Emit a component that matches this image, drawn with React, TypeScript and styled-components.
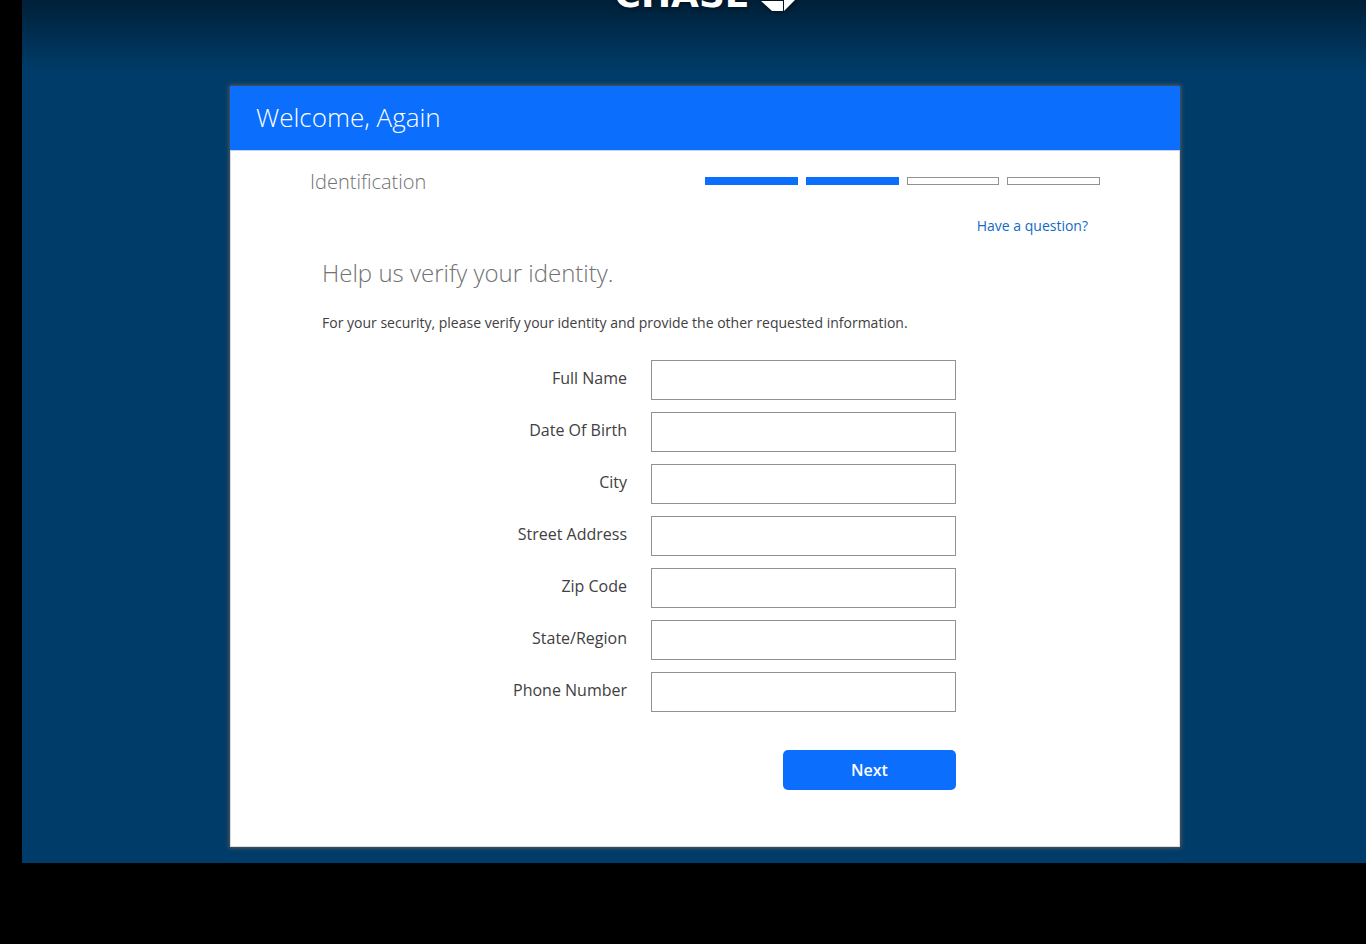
import React from "react";
import styled, { createGlobalStyle } from "styled-components";

const GlobalStyle = createGlobalStyle`
  *, *::before, *::after {
    box-sizing: border-box;
  }
  body {
    margin: 0;
    background: #000;
    color: #414042;
    font-family: "Open Sans", "Noto Sans", sans-serif;
    font-size: 14px;
  }
`;

const Backdrop = styled.div`
  margin: 0 0 80px 22px;
  padding: 0 0 16px 22px;
  background: #003c69 linear-gradient(#002038, #003c69) no-repeat 0 0 / 100% 72px;
`;

const Masthead = styled.header`
  display: flex;
  justify-content: center;
  align-items: flex-end;
  gap: 12px;
  height: 12px;
  margin-bottom: 74px;
`;

const Brand = styled.span`
  color: #fff;
  font-family: "DejaVu Sans", sans-serif;
  font-size: 36px;
  font-weight: 700;
  line-height: 34px;
  text-shadow: 0 0 6px #000a14;
`;

const Octagon = styled.svg`
  flex: none;
  filter: drop-shadow(0 0 3px #000a14);
`;

const Card = styled.main`
  width: 100%;
  max-width: 950px;
  margin: 0 auto;
  background: #fff;
  border: 1px solid #dcdcdc;
  border-top: 0;
  box-shadow: 0 0 4px 1px #5a5a5a;
`;

const CardHeader = styled.div`
  margin: 0 -1px;
  padding: 0 26px 2px;
  background: #0b6efd;
  border-bottom: 1px solid #c3d5f0;
`;

const Title = styled.h1`
  margin: 0;
  color: #fff;
  font-size: 26px;
  font-weight: 300;
  line-height: 62px;
`;

const CardBody = styled.div`
  padding: 0 79px 56px;
`;

const StepRow = styled.div`
  display: grid;
  grid-template-columns: 1fr 1fr;
  align-items: center;
  height: 60px;
`;

const StepName = styled.h2`
  margin: 0;
  padding-top: 2px;
  color: #717171;
  font-size: 20px;
  font-weight: 300;
  line-height: 28px;
`;

const Steps = styled.div`
  display: grid;
  grid-template-columns: repeat(4, 1fr);
  gap: 8px;
`;

const Step = styled.span<{ $done: boolean }>`
  height: 8px;
  border: 1px solid ${(p) => (p.$done ? "#0b6efd" : "#929292")};
  background: ${(p) => (p.$done ? "#0b6efd" : "#fff")};
`;

const Content = styled.div`
  padding: 1px 12px 0;
`;

const HelpRow = styled.div`
  display: flex;
  justify-content: flex-end;
  line-height: 28px;
`;

const HelpLink = styled.a`
  color: #126bc5;
  text-decoration: none;
`;

const Heading = styled.h3`
  margin: 16px 0 0;
  color: #717171;
  font-size: 24px;
  font-weight: 300;
  line-height: 34px;
`;

const Intro = styled.p`
  margin: 22px 0 0;
  line-height: 22px;
`;

const Form = styled.form`
  display: flex;
  flex-direction: column;
  gap: 12px;
  margin: 26px 132px 0 0;
`;

const Field = styled.div`
  display: grid;
  grid-template-columns: 1fr 305px;
  gap: 24px;
`;

const Label = styled.label`
  font-size: 16px;
  line-height: 36px;
  text-align: right;
`;

const Input = styled.input`
  width: 100%;
  height: 40px;
  padding: 0 12px;
  border: 1px solid #929292;
  border-radius: 0;
  background: #fff;
  font: inherit;
`;

const NextButton = styled.button`
  align-self: flex-end;
  width: 173px;
  height: 40px;
  margin-top: 26px;
  border: 0;
  border-radius: 5px;
  background: #0b6efd;
  color: #fff;
  font: 600 16px "Open Sans", "Noto Sans", sans-serif;
`;

const fields = [
  { id: "full-name", label: "Full Name" },
  { id: "birth", label: "Date Of Birth" },
  { id: "city", label: "City" },
  { id: "street", label: "Street Address" },
  { id: "zip", label: "Zip Code" },
  { id: "state", label: "State/Region" },
  { id: "phone", label: "Phone Number" },
];

const steps = [true, true, false, false];

export default function App() {
  return (
    <>
      <GlobalStyle />
      <Backdrop>
        <Masthead>
          <Brand>CHASE</Brand>
          <Octagon width="34" height="34" viewBox="0 0 34 34" aria-hidden="true">
            <g fill="#fff">
              <path d="M12 0H33L22 11V1Z" />
              <path d="M34 11V22L23 33V12Z" />
              <path d="M22 33H11L0 23H22Z" />
              <path d="M0 22V11L11 0V22Z" />
            </g>
          </Octagon>
        </Masthead>
        <Card>
          <CardHeader>
            <Title>Welcome, Again</Title>
          </CardHeader>
          <CardBody>
            <StepRow>
              <StepName>Identification</StepName>
              <Steps>
                {steps.map((done, i) => (
                  <Step key={i} $done={done} />
                ))}
              </Steps>
            </StepRow>
            <Content>
              <HelpRow>
                <HelpLink href="#">Have a question?</HelpLink>
              </HelpRow>
              <Heading>Help us verify your identity.</Heading>
              <Intro>
                For your security, please verify your identity and provide the other requested information.
              </Intro>
              <Form>
                {fields.map((f) => (
                  <Field key={f.id}>
                    <Label htmlFor={f.id}>{f.label}</Label>
                    <Input id={f.id} type="text" />
                  </Field>
                ))}
                <NextButton type="button">Next</NextButton>
              </Form>
            </Content>
          </CardBody>
        </Card>
      </Backdrop>
    </>
  );
}
